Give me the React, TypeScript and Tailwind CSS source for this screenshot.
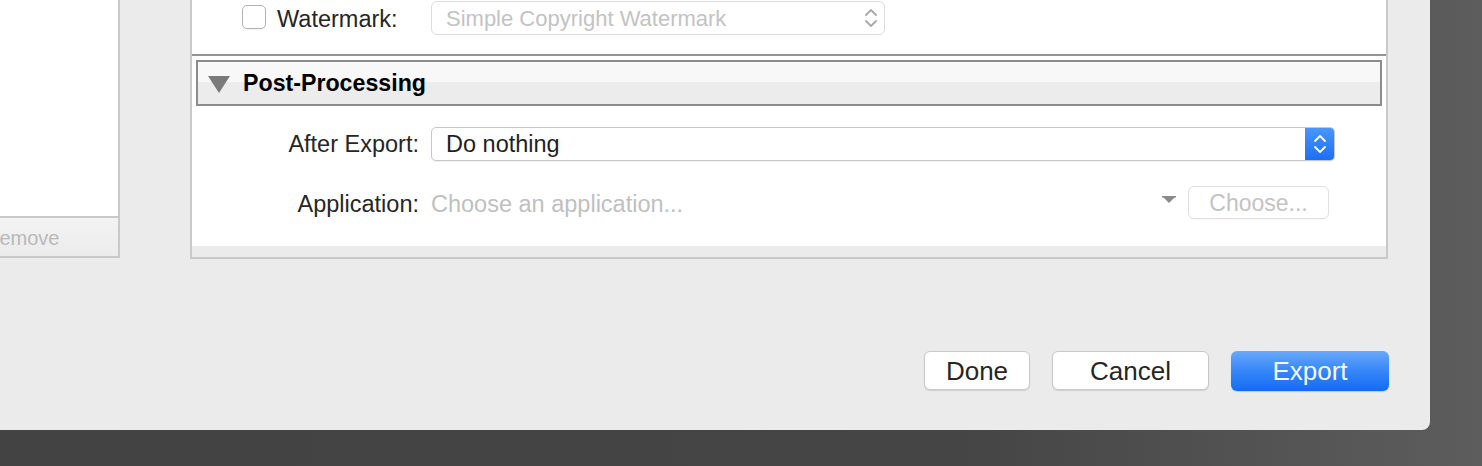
import React from "react";

function Stepper({ className }: { className: string }) {
  return (
    <svg width="12" height="22" viewBox="0 0 12 22" className={className} fill="none">
      <path d="M1 8 L6 3 L11 8" stroke="currentColor" strokeWidth="1.8" strokeLinecap="round" strokeLinejoin="round" />
      <path d="M1 14 L6 19 L11 14" stroke="currentColor" strokeWidth="1.8" strokeLinecap="round" strokeLinejoin="round" />
    </svg>
  );
}

function Disclosure() {
  return (
    <svg width="22" height="17" viewBox="0 0 22 17">
      <polygon points="0,0 22,0 11,17" fill="#7a7a7a" />
    </svg>
  );
}

export default function App() {
  return (
    <div className="h-[466px] w-[1482px] overflow-hidden bg-[linear-gradient(90deg,#434343_0%,#454545_65%,#5d5d5d_100%)] font-['Liberation_Sans',Arial,sans-serif] text-[#262626]">
      <div className="flex h-[430px] w-[1430px] flex-col rounded-br-[8px] bg-[#ebebeb]">
        <div className="flex h-[259px] items-start">
          {/* left list, mostly cut off */}
          <div className="flex h-[258px] w-[120px] flex-col border-r-2 border-b-2 border-[#c9c9c9]">
            <div className="h-[218px] border-b-2 border-[#c9c9c9] bg-white" />
            <div className="flex h-[36px] items-center overflow-hidden bg-[linear-gradient(180deg,#f3f3f3,#ececec)] pt-[3px]">
              <span className="-ml-[15px] text-[20px] leading-none text-[#b9b9b9]">Remove</span>
            </div>
          </div>

          {/* export settings panel */}
          <div className="ml-[70px] flex h-[259px] w-[1198px] flex-col border-x-2 border-b-2 border-[#c8c8c8] bg-white">
            <div className="flex h-[54px] items-start">
              <div className="ml-[50px] mt-[5px] h-[24px] w-[24px] rounded-[5px] border border-[#b3b3b3] bg-white shadow-[0_1px_0_rgba(0,0,0,0.05)]" />
              <span className="ml-[11px] mt-[8px] w-[154px] text-[23.5px] leading-none">Watermark:</span>
              <div className="mt-[1px] flex h-[34px] w-[454px] items-center rounded-[6px] border border-[#dddddd] bg-white pl-[14px] pr-[7px]">
                <span className="mt-[2px] flex-1 text-[22px] leading-none text-[#c3c3c3]">Simple Copyright Watermark</span>
                <Stepper className="text-[#a9a9a9]" />
              </div>
            </div>
            <div className="h-[2px] bg-[#959595]" />
            <div className="px-[4px] pt-[4px]">
              <div className="flex h-[46px] items-center border-2 border-[#8c8c8c] bg-[linear-gradient(180deg,#f8f8f8_0%,#f8f8f8_47%,#ececec_47%,#ececec_100%)]">
                <div className="ml-[10px] mt-[2px] flex">
                  <Disclosure />
                </div>
                <span className="ml-[13px] mt-[1px] text-[23.2px] font-bold leading-none text-black">Post-Processing</span>
              </div>
            </div>

            <div className="mt-[21px] flex h-[34px] items-center">
              <span className="mt-[2px] w-[227px] text-right text-[23.5px] leading-none">After Export:</span>
              <div className="ml-[12px] flex h-[34px] w-[904px] items-stretch overflow-hidden rounded-[5px] border border-[#c7c7c7] bg-white shadow-[0_1px_0_rgba(0,0,0,0.06)]">
                <span className="flex flex-1 items-center pl-[14px] pt-[2px] text-[23.5px] leading-none text-[#1e1e1e]">Do nothing</span>
                <div className="-my-px -mr-px flex w-[30px] items-center justify-center rounded-r-[5px] bg-[linear-gradient(180deg,#4a97fb,#1a6ef6)] text-white">
                  <Stepper className="" />
                </div>
              </div>
            </div>

            <div className="mt-[25px] flex h-[33px] items-center">
              <span className="mt-[4px] w-[227px] text-right text-[23.5px] leading-none">Application:</span>
              <span className="ml-[12px] mt-[4px] flex-1 text-[23.5px] leading-none text-[#c0c0c0]">Choose an application...</span>
              <svg width="14" height="7" viewBox="0 0 14 7" className="-mt-[6px]">
                <rect x="0" y="0" width="14" height="1.5" fill="#8a8a8a" />
                <polygon points="1,1 13,1 7,7" fill="#8a8a8a" />
              </svg>
              <div className="ml-[12px] mr-[57px] flex h-[33px] w-[141px] items-center justify-center rounded-[6px] border border-[#e0e0e0] bg-white pt-[2px] shadow-[0_1px_0_rgba(0,0,0,0.03)]">
                <span className="text-[23px] leading-none text-[#c3c3c3]">Choose...</span>
              </div>
            </div>

            <div className="mt-auto h-[11px] bg-[#ebebeb]" />
          </div>
        </div>

        <div className="mt-[92px] flex justify-end gap-[22px] pr-[41px]">
          <button className="flex h-[39px] w-[106px] items-center justify-center rounded-[6px] border border-[#c9c9c9] bg-white text-[26px] leading-none text-[#262626] shadow-[0_1px_1px_rgba(0,0,0,0.12)]">
            Done
          </button>
          <button className="flex h-[39px] w-[157px] items-center justify-center rounded-[6px] border border-[#c9c9c9] bg-white text-[26px] leading-none text-[#262626] shadow-[0_1px_1px_rgba(0,0,0,0.12)]">
            Cancel
          </button>
          <button className="flex h-[40px] w-[158px] items-center justify-center rounded-[6px] bg-[linear-gradient(180deg,#6aa9fb_0%,#3b89f9_45%,#116cf5_100%)] text-[26px] leading-none text-[#f4f8ff] shadow-[0_1px_1px_rgba(0,0,0,0.15)]">
            Export
          </button>
        </div>
      </div>
    </div>
  );
}
